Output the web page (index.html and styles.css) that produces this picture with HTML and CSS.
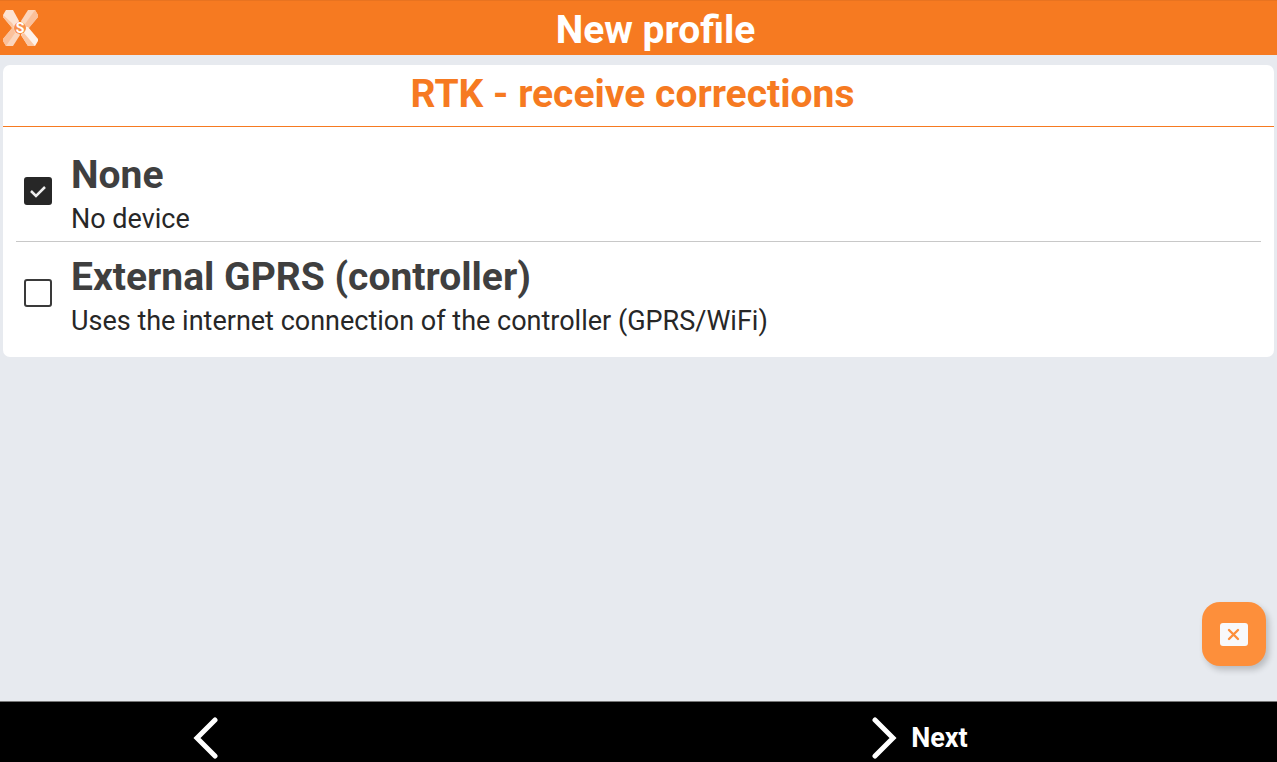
FILE: index.html
```html
<!DOCTYPE html>
<html lang="en">
<head>
  <meta charset="UTF-8" />
  <meta name="viewport" content="width=device-width, initial-scale=1" />
  <title>New profile</title>
  <link rel="stylesheet" href="styles.css">
</head>
<body>
  <header class="topbar">
    <svg class="logo" viewBox="0 0 36 37" aria-hidden="true">
      <path fill="#fde3d2" d="M0 5 3 0h7l6 11-3 8h-3L0 7z"/>
      <path fill="#fbc7a4" d="M0 7V5l9 8 3 5-2 1z"/>
      <path fill="#fcd5bc" d="M25 0h7l3 5v2L25 19h-4l-3-8z"/>
      <path fill="#fbc09a" d="M32 0l3 5v2L25 19l-3-5z"/>
      <path fill="#fcd5bc" d="M0 29 10 17h3l4 8-7 11H3l-3-5z"/>
      <path fill="#fbc09a" d="M0 29 10 17l2 6L3 36l-3-5z"/>
      <path fill="#fef1e9" d="M25 17l10 12v2l-3 5h-7l-7-11 3-8z"/>
      <path fill="#fbc7a4" d="M18 25l3-2 11 13h-7z"/>
      <circle cx="17" cy="18" r="6" fill="#f8904c"/>
      <text class="logo-letter" x="17" y="23" text-anchor="middle">S</text>
    </svg>
    <h1>New profile</h1>
  </header>

  <main>
    <section class="card">
      <h2>RTK - receive corrections</h2>
      <div class="options">
        <label class="option" for="none">
          <input type="checkbox" id="none" checked>
          <span class="option-text">
            <span class="option-name">None</span>
            <span class="option-info">No device</span>
          </span>
        </label>
        <label class="option" for="gprs">
          <input type="checkbox" id="gprs">
          <span class="option-text">
            <span class="option-name">External GPRS (controller)</span>
            <span class="option-info">Uses the internet connection of the controller (GPRS/WiFi)</span>
          </span>
        </label>
      </div>
    </section>
  </main>

  <button class="float-btn" type="button" aria-label="Close">
    <svg width="28" height="23" viewBox="0 0 28 23">
      <rect width="28" height="23" rx="3" fill="#f8f9fb"/>
      <path d="M9 7l9 9M18 7l-9 9" stroke="#fd8f3b" stroke-width="2.4" stroke-linecap="round"/>
    </svg>
  </button>

  <footer class="navbar">
    <button class="nav-btn back" type="button" aria-label="Back">
      <svg width="26" height="42" viewBox="0 0 26 42"><path d="M22 3 4 21l18 18"/></svg>
    </button>
    <button class="nav-btn" type="button">
      <svg width="26" height="42" viewBox="0 0 26 42"><path d="M4 3l18 18L4 39"/></svg>
      <span>Next</span>
    </button>
  </footer>
</body>
</html>
```
FILE: styles.css
```css
:root {
  --orange: #f67a21;
  --orange-light: #fd8f3b;
  --background: #e7eaef;
  --dark: #272727;
}

* {
  box-sizing: border-box;
}

body {
  display: flex;
  flex-direction: column;
  min-height: 100vh;
  margin: 0;
  font-family: Roboto, sans-serif;
  background: var(--background);
  color: var(--dark);
}

h1,
h2 {
  margin: 0;
  font-size: 39px;
  text-align: center;
}

.topbar {
  display: grid;
  grid-template-columns: 36px 1fr 36px;
  align-items: center;
  height: 55px;
  padding: 0 3px;
  background: var(--orange);
  border-top: 1px solid #e87320;
  color: white;
}

.topbar h1 {
  line-height: 58px;
  padding-left: 34px;
}

.logo {
  width: 36px;
  height: 37px;
  margin-bottom: 3px;
}

.logo-letter {
  font-size: 14px;
  font-weight: bold;
  fill: white;
}

main {
  flex: 1;
  padding: 10px 3px;
}

.card {
  background: white;
  border-radius: 7px;
  padding-bottom: 14px;
}

.card h2 {
  height: 62px;
  padding-right: 12px;
  line-height: 58px;
  color: var(--orange);
  border-bottom: 1px solid var(--orange);
}

.options {
  padding: 14px 13px 0;
}

.option {
  display: flex;
  align-items: center;
  gap: 19px;
  min-height: 101px;
  padding: 0 8px;
  border-bottom: 1px solid #c8c8c8;
}

.option:last-child {
  border-bottom: none;
}

.option input {
  appearance: none;
  flex: none;
  width: 28px;
  height: 28px;
  margin: 0;
  border: 2px solid #3a3a3a;
  border-radius: 3px;
}

.option input:checked {
  border-color: var(--dark);
  background: var(--dark) url("data:image/svg+xml,%3Csvg xmlns='http://www.w3.org/2000/svg' viewBox='0 0 24 24'%3E%3Cpath d='M5 12l5 5 9-9' fill='none' stroke='%23eee' stroke-width='2.5'/%3E%3C/svg%3E") center / 24px no-repeat;
}

.option-text {
  padding-top: 10px;
}

.option-name,
.option-info {
  display: block;
}

.option-name {
  font-size: 39px;
  font-weight: bold;
  line-height: 46px;
  color: #3f3f3f;
}

.option-info {
  font-size: 27px;
  line-height: 42px;
}

.float-btn {
  position: fixed;
  right: 11px;
  bottom: 96px;
  display: flex;
  align-items: center;
  justify-content: center;
  width: 64px;
  height: 64px;
  padding: 0;
  border: none;
  border-radius: 18px;
  background: var(--orange-light);
  box-shadow: 3px 4px 6px rgba(0, 0, 0, 0.2);
  cursor: pointer;
}

.navbar {
  display: grid;
  grid-template-columns: 44% 56%;
  height: 61px;
  background: black;
  border-top: 1px solid #777;
}

.nav-btn {
  display: flex;
  align-items: center;
  justify-content: center;
  gap: 14px;
  padding: 12px 0 0;
  border: none;
  background: none;
  color: white;
  font-family: inherit;
  font-size: 27px;
  font-weight: bold;
  cursor: pointer;
}

.nav-btn.back {
  padding-right: 150px;
}

.nav-btn path {
  fill: none;
  stroke: white;
  stroke-width: 5;
  stroke-linecap: round;
}
```
